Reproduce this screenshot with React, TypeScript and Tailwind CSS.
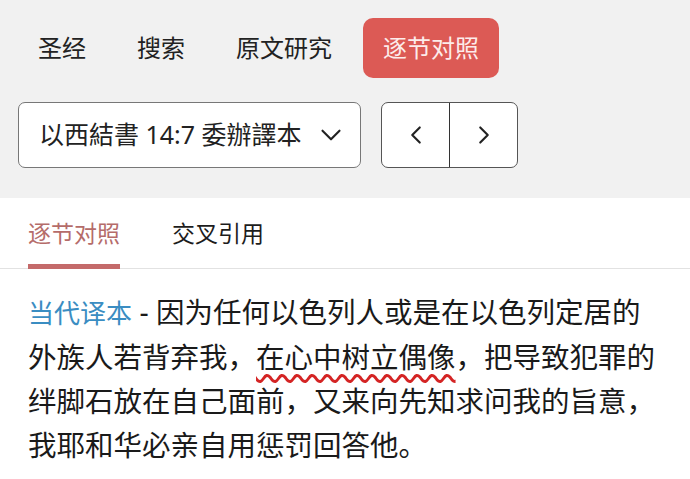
import React from 'react';
import { ChevronDown, ChevronLeft, ChevronRight } from 'lucide-react';

const NAV = ['圣经', '搜索', '原文研究', '逐节对照'];

export default function App() {
  const active = '逐节对照';

  return (
    <div className="w-[690px] h-[479px] overflow-hidden bg-white text-[#1c1c1c] font-['Noto_Sans','Noto_Sans_CJK_SC',sans-serif]">
      {/* top area */}
      <div className="bg-[#f1f1f1] pt-[18px] pb-[30px]">
        <div className="flex gap-[11px] pl-[18px]">
          {NAV.map((n) => (
            <div
              key={n}
              className={
                n === active
                  ? 'h-[60px] px-5 flex items-center rounded-[10px] bg-[#dc5a55] text-[#fdeceb] text-[24px]'
                  : 'h-[60px] px-5 flex items-center text-[24px] text-[#222]'
              }
            >
              {n}
            </div>
          ))}
        </div>

        <div className="flex gap-5 pl-[18px] mt-[24px]">
          <div className="w-[343px] h-[66px] bg-white border border-[#777] rounded-[7px] flex items-center justify-between pl-5 pr-[12px]">
            <span className="text-[25px] text-[#222]">以西結書 14:7 委辦譯本</span>
            <ChevronDown size={34} className="text-[#222]" strokeWidth={1.5} />
          </div>
          <div className="w-[137px] h-[66px] bg-white border border-[#555] rounded-[7px] flex">
            <button className="flex-1 flex items-center justify-center border-r border-[#333]">
              <ChevronLeft size={30} className="text-[#222]" strokeWidth={1.7} />
            </button>
            <button className="flex-1 flex items-center justify-center">
              <ChevronRight size={30} className="text-[#222]" strokeWidth={1.7} />
            </button>
          </div>
        </div>
      </div>

      {/* tabs */}
      <div className="flex gap-[52px] pl-[28px] pt-[19px] border-b border-[#e2e2e2]">
        <div className="flex flex-col">
          <span className="text-[23px] leading-[32px] text-[#b56c6a]">逐节对照</span>
          <div className="mt-[15px] h-[5px] -mb-px bg-[#c46a6a]" />
        </div>
        <div className="flex flex-col">
          <span className="text-[23px] leading-[32px] text-[#1c1c1c]">交叉引用</span>
        </div>
      </div>

      {/* verse */}
      <p className="px-[28px] pt-[21px] text-[28.5px] leading-[44px] text-[#1a1a1a]">
        <span className="text-[26px] text-[#3a8dc2]">当代译本</span> - 因为任何以色列人或是在以色列定居的外族人若背弃我，
        <span className="underline decoration-wavy decoration-[#d42424] decoration-[3px] underline-offset-[6px]">在心中树立偶像</span>
        ，把导致犯罪的绊脚石放在自己面前，又来向先知求问我的旨意，我耶和华必亲自用惩罚回答他。
      </p>
    </div>
  );
}
